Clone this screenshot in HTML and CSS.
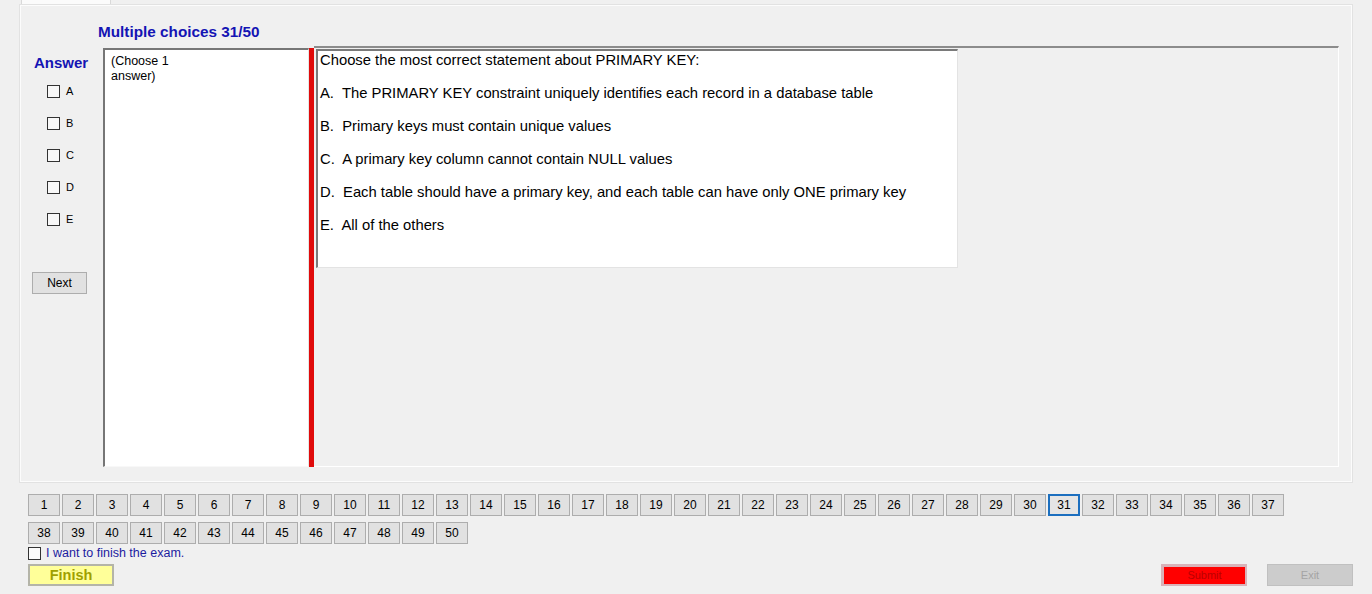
FILE: index.html
```html
<!DOCTYPE html>
<html>
<head>
<meta charset="utf-8">
<link rel="stylesheet" href="styles.css">
</head>
<body>
<div class="tabstrip"><div class="tab"></div></div>
<div class="panel">
  <div class="title">Multiple choices 31/50</div>
  <div class="content">
    <div class="answers">
      <div class="answer-label">Answer</div>
      <label class="opt"><span class="box"></span><span>A</span></label>
      <label class="opt"><span class="box"></span><span>B</span></label>
      <label class="opt"><span class="box"></span><span>C</span></label>
      <label class="opt"><span class="box"></span><span>D</span></label>
      <label class="opt"><span class="box"></span><span>E</span></label>
      <div class="next">Next</div>
    </div>
    <div class="choose">(Choose 1<br>answer)</div>
    <div class="redbar"></div>
    <div class="qpanel">
      <div class="qbox">
        <p>Choose the most correct statement about PRIMARY KEY:</p>
        <p>A.  The PRIMARY KEY constraint uniquely identifies each record in a database table</p>
        <p>B.  Primary keys must contain unique values</p>
        <p>C.  A primary key column cannot contain NULL values</p>
        <p>D.  Each table should have a primary key, and each table can have only ONE primary key</p>
        <p>E.  All of the others</p>
      </div>
    </div>
  </div>
</div>
<div class="pager">
  <div class="prow">
    <span class="pb">1</span><span class="pb">2</span><span class="pb">3</span><span class="pb">4</span><span class="pb">5</span><span class="pb">6</span><span class="pb">7</span><span class="pb">8</span><span class="pb">9</span><span class="pb">10</span><span class="pb">11</span><span class="pb">12</span><span class="pb">13</span><span class="pb">14</span><span class="pb">15</span><span class="pb">16</span><span class="pb">17</span><span class="pb">18</span><span class="pb">19</span><span class="pb">20</span><span class="pb">21</span><span class="pb">22</span><span class="pb">23</span><span class="pb">24</span><span class="pb">25</span><span class="pb">26</span><span class="pb">27</span><span class="pb">28</span><span class="pb">29</span><span class="pb">30</span><span class="pb current">31</span><span class="pb">32</span><span class="pb">33</span><span class="pb">34</span><span class="pb">35</span><span class="pb">36</span><span class="pb">37</span>
  </div>
  <div class="prow">
    <span class="pb">38</span><span class="pb">39</span><span class="pb">40</span><span class="pb">41</span><span class="pb">42</span><span class="pb">43</span><span class="pb">44</span><span class="pb">45</span><span class="pb">46</span><span class="pb">47</span><span class="pb">48</span><span class="pb">49</span><span class="pb">50</span>
  </div>
</div>
<label class="finish-check"><span class="box"></span><span>I want to finish the exam.</span></label>
<div class="bottom">
  <div class="finish">Finish</div>
  <div class="spacer"></div>
  <div class="submit">Submit</div>
  <div class="exit">Exit</div>
</div>
</body>
</html>
```
FILE: styles.css
```css
* { box-sizing: border-box; }
html, body { margin: 0; padding: 0; }
body {
  width: 1372px;
  height: 594px;
  overflow: hidden;
  background: #f0f0f0;
  font-family: "Liberation Sans", Arial, sans-serif;
  color: #000;
}
.tabstrip { height: 5px; }
.tab {
  margin-left: 21px;
  width: 90px;
  height: 5px;
  background: #fbfbfb;
  border-left: 1px solid #d9d9d9;
  border-right: 1px solid #d9d9d9;
}
.panel {
  margin-left: 20px;
  width: 1332px;
  height: 477px;
  border: 1px solid #fcfcfc;
  box-shadow: 0 0 0 1px #e2e2e2;
}
.title {
  margin-top: 17px;
  padding-left: 77px;
  font-size: 15.3px;
  line-height: 18px;
  font-weight: bold;
  color: #1414b4;
}
.content {
  display: flex;
  margin-top: 5px;
  height: 421px;
}
.answers {
  width: 82px;
  display: flex;
  flex-direction: column;
}
.answer-label {
  margin-top: 8px;
  padding-left: 13px;
  font-size: 15px;
  line-height: 18px;
  font-weight: bold;
  color: #1414b4;
}
.opt {
  display: flex;
  align-items: center;
  height: 32px;
  padding-left: 26px;
  font-size: 11px;
}
.answer-label + .opt { margin-top: 3px; }
.box {
  display: inline-block;
  width: 13px;
  height: 13px;
  border: 1px solid #333;
  background: #f8f8f8;
  margin-right: 6px;
}
.next {
  margin-top: 37px;
  margin-left: 11px;
  width: 55px;
  height: 22px;
  background: #e1e1e1;
  border: 1px solid #adadad;
  font-size: 12px;
  line-height: 20px;
  text-align: center;
}
.choose {
  margin-top: 2px;
  width: 206px;
  height: 419px;
  background: #fff;
  border-top: 2px solid #767676;
  border-left: 2px solid #767676;
  border-right: 1px solid #e6e6e6;
  border-bottom: 1px solid #f8f8f8;
  padding: 4px 0 0 6px;
  font-size: 12.5px;
  line-height: 15px;
}
.redbar {
  margin-top: 2px;
  width: 5px;
  height: 419px;
  background: #e00b0b;
}
.qpanel {
  width: 1025px;
  height: 421px;
  border-top: 2px solid #8c8c8c;
  border-right: 1px solid #fff;
  border-bottom: 1px solid #fff;
}
.qbox {
  margin-top: 1px;
  margin-left: 2px;
  width: 642px;
  height: 219px;
  background: #fff;
  border-top: 2px solid #7a7a7a;
  border-left: 2px solid #7a7a7a;
  border-right: 1px solid #e3e3e3;
  border-bottom: 1px solid #e3e3e3;
  padding: 1px 0 0 2px;
  font-size: 14.8px;
}
.qbox p {
  margin: 0 0 16.5px 0;
  line-height: 16.5px;
  white-space: pre;
}
.pager {
  margin-top: 12px;
  margin-left: 28px;
  display: flex;
  flex-direction: column;
  gap: 6px;
}
.prow { display: flex; gap: 2px; }
.pb {
  width: 32px;
  height: 22px;
  background: #e1e1e1;
  border: 1px solid #adadad;
  font-size: 12px;
  line-height: 20px;
  text-align: center;
}
.pb.current {
  border: 2px solid #1c6fbf;
  line-height: 18px;
  background: #e5e5e5;
}
.finish-check {
  display: flex;
  align-items: center;
  margin-top: 1px;
  margin-left: 28px;
  height: 16px;
  font-size: 12.5px;
  color: #1c1ca0;
}
.finish-check .box { margin-right: 5px; background: #fafafa; }
.bottom {
  display: flex;
  margin-top: 3px;
  padding-left: 28px;
  padding-right: 19px;
}
.finish {
  width: 86px;
  height: 22px;
  background: #ffff99;
  border: 2px solid #b4b4a8;
  color: #a0a000;
  font-weight: bold;
  font-size: 14.5px;
  line-height: 18px;
  text-align: center;
}
.spacer { flex: 1; }
.submit {
  width: 86px;
  height: 22px;
  background: #ff0000;
  border: 2px solid #d9b2b8;
  border-width: 3px 2px 2px 3px;
  color: #bb0000;
  font-size: 11px;
  line-height: 16px;
  text-align: center;
}
.exit {
  margin-left: 20px;
  width: 86px;
  height: 22px;
  background: #cccccc;
  border: 1px solid #c0c0c0;
  color: #a4a4a4;
  font-size: 11px;
  line-height: 20px;
  text-align: center;
}
```
